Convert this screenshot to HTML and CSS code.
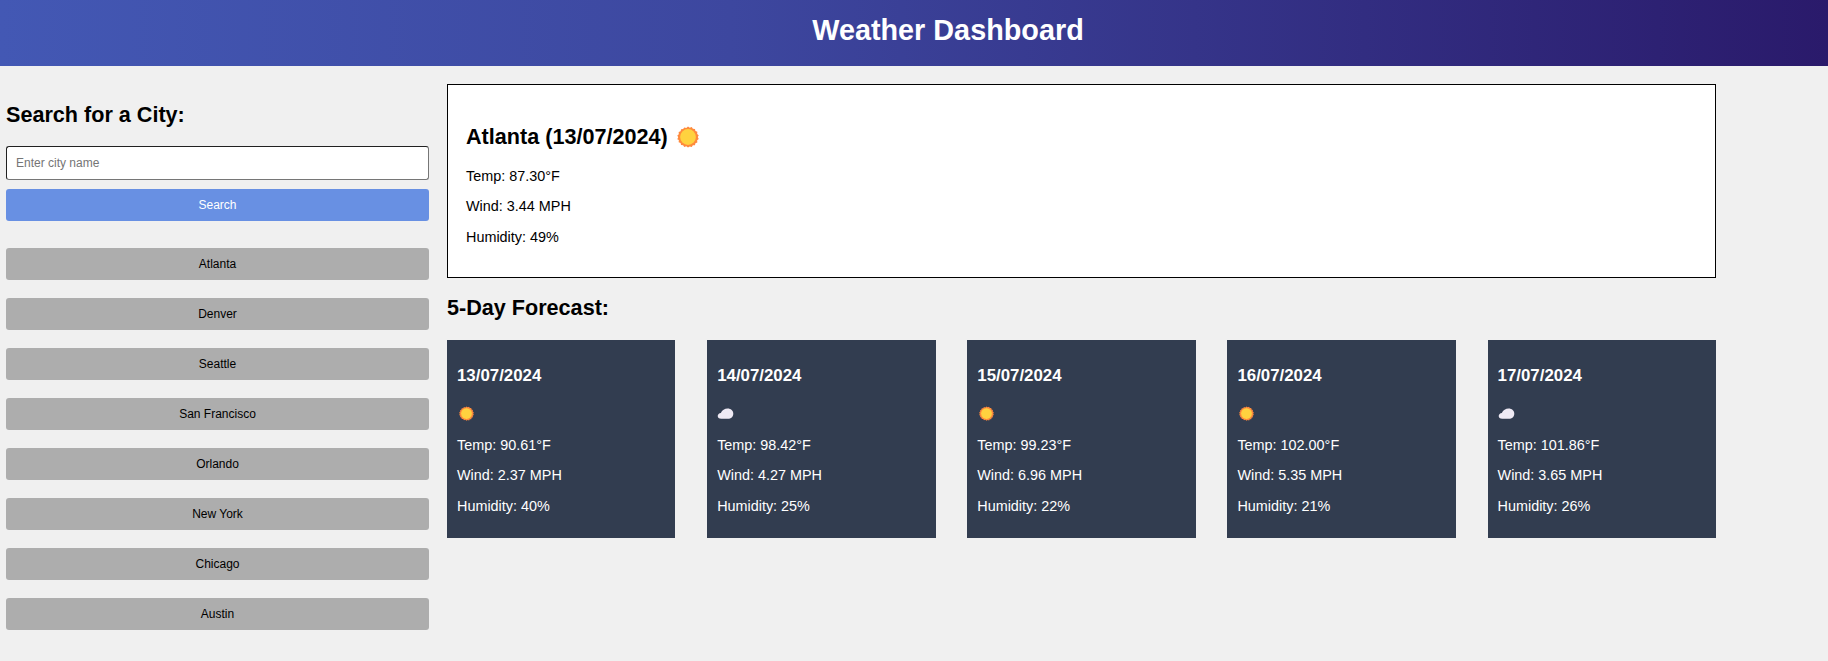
FILE: index.html
```html
<!DOCTYPE html>
<html>
<head>
  <meta charset="UTF-8">
  <title>Weather Dashboard</title>
  <link rel="stylesheet" href="styles.css">
</head>
<body>
  <svg class="defs" width="0" height="0">
    <symbol id="sun" viewBox="0 0 24 24">
      <path fill="#ff8a3c" d="M12 .6l1.9 1.3 2.2-.7 1.2 1.9 2.3.1.5 2.2 2.1.9-.2 2.3 1.7 1.5-1 2 1 2-1.7 1.5.2 2.3-2.1.9-.5 2.2-2.3.1-1.2 1.9-2.2-.7L12 23.4l-1.9-1.3-2.2.7-1.2-1.9-2.3-.1-.5-2.2-2.1-.9.2-2.3L.3 14.4l1-2-1-2L2 8.900l-.2-2.300 2.100-.9.5-2.200 2.300-.1L7.900 1.500l2.200.7z"/>
      <circle cx="12" cy="12" r="8.6" fill="#ffd23f"/>
    </symbol>
    <symbol id="cloud" viewBox="0 0 24 18">
      <path fill="#efeaf4" d="M6 16.500C2.500 16.500 1 14.600 1 12.600c0-2.400 2-4 4.400-4.400C7.200 4.400 10.800 2 15 2c4.600 0 8 3 8 7.400 0 4.400-3.200 7.100-7.600 7.100z"/>
    </symbol>
  </svg>

  <header class="topbar">
    <h1>Weather Dashboard</h1>
  </header>

  <div class="layout">
    <aside class="sidebar">
      <h2>Search for a City:</h2>
      <input class="city-input" type="text" placeholder="Enter city name">
      <button class="btn btn-search">Search</button>
      <div class="history">
        <button class="btn btn-city">Atlanta</button>
        <button class="btn btn-city">Denver</button>
        <button class="btn btn-city">Seattle</button>
        <button class="btn btn-city">San Francisco</button>
        <button class="btn btn-city">Orlando</button>
        <button class="btn btn-city">New York</button>
        <button class="btn btn-city">Chicago</button>
        <button class="btn btn-city">Austin</button>
      </div>
    </aside>

    <main class="content">
      <section class="current">
        <h2>Atlanta (13/07/2024) <svg class="icon-big"><use href="#sun"/></svg></h2>
        <p>Temp: 87.30°F</p>
        <p>Wind: 3.44 MPH</p>
        <p>Humidity: 49%</p>
      </section>

      <h2 class="forecast-title">5-Day Forecast:</h2>
      <section class="forecast">
        <div class="card">
          <h3>13/07/2024</h3>
          <svg class="icon-sun"><use href="#sun"/></svg>
          <p>Temp: 90.61°F</p>
          <p>Wind: 2.37 MPH</p>
          <p>Humidity: 40%</p>
        </div>
        <div class="card">
          <h3>14/07/2024</h3>
          <svg class="icon-cloud"><use href="#cloud"/></svg>
          <p>Temp: 98.42°F</p>
          <p>Wind: 4.27 MPH</p>
          <p>Humidity: 25%</p>
        </div>
        <div class="card">
          <h3>15/07/2024</h3>
          <svg class="icon-sun"><use href="#sun"/></svg>
          <p>Temp: 99.23°F</p>
          <p>Wind: 6.96 MPH</p>
          <p>Humidity: 22%</p>
        </div>
        <div class="card">
          <h3>16/07/2024</h3>
          <svg class="icon-sun"><use href="#sun"/></svg>
          <p>Temp: 102.00°F</p>
          <p>Wind: 5.35 MPH</p>
          <p>Humidity: 21%</p>
        </div>
        <div class="card">
          <h3>17/07/2024</h3>
          <svg class="icon-cloud"><use href="#cloud"/></svg>
          <p>Temp: 101.86°F</p>
          <p>Wind: 3.65 MPH</p>
          <p>Humidity: 26%</p>
        </div>
      </section>
    </main>
  </div>
</body>
</html>
```

FILE: styles.css
```css
* {
  box-sizing: border-box;
}
body {
  margin: 0;
  background: #f0f0f0;
  color: #000;
  font-family: "Liberation Sans", Arial, sans-serif;
  font-size: 14.4px;
}
.defs {
  display: block;
  height: 0;
}
.topbar {
  height: 66px;
  padding-left: 68px;
  background: linear-gradient(90deg, #4358b4, #3d479f 40%, #2a1a6b);
  color: #fff;
  text-align: center;
}
.topbar h1 {
  margin: 0;
  padding-top: 14px;
  font-size: 28.8px;
}
.layout {
  display: flex;
  gap: 18px;
  padding: 18px 0 0 6px;
}
.sidebar {
  width: 423px;
  flex-shrink: 0;
  padding-top: 18px;
}
.sidebar h2 {
  margin: 0 0 18px;
  font-size: 21.6px;
}
.city-input {
  display: block;
  width: 100%;
  height: 34px;
  padding: 0 9px;
  border: 1px inset #767676;
  border-radius: 3px;
  background: #fff;
  font-family: inherit;
  font-size: 12px;
}
.btn {
  display: block;
  width: 100%;
  height: 32px;
  border: 0;
  border-radius: 3px;
  font-family: inherit;
  font-size: 12px;
}
.btn-search {
  margin-top: 9px;
  background: #6890e3;
  color: #fff;
}
.history {
  display: flex;
  flex-direction: column;
  gap: 18px;
  margin-top: 27px;
}
.btn-city {
  background: #adadad;
  color: #000;
}
.content {
  width: 1269px;
}
.current {
  height: 194px;
  padding: 39px 18px 0;
  border: 1px solid #000;
  background: #fff;
}
.current h2 {
  display: flex;
  align-items: center;
  gap: 9px;
  margin: 0 0 18px;
  font-size: 21.6px;
}
.current p,
.card p {
  margin: 0 0 14.4px;
}
.icon-big {
  width: 22px;
  height: 22px;
}
.forecast-title {
  margin: 17px 0 19px;
  font-size: 21.6px;
}
.forecast {
  display: flex;
  justify-content: space-between;
}
.card {
  width: 18%;
  height: 198px;
  padding: 26px 10px 0;
  background: #323d50;
  color: #fff;
}
.card h3 {
  margin: 0 0 20px;
  font-size: 16.85px;
}
.card svg {
  display: block;
  margin: 0 0 16px;
}
.icon-sun {
  width: 15px;
  height: 15px;
  margin-left: 2px !important;
}
.icon-cloud {
  width: 17px;
  height: 15px;
}
```
